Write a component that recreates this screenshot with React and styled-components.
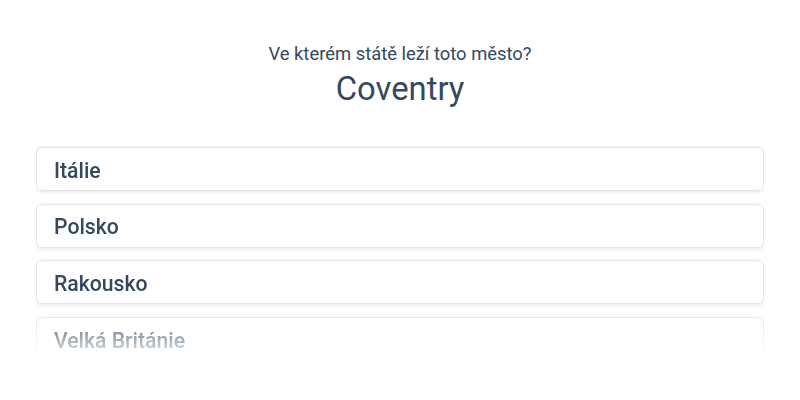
import React from "react";
import styled, { createGlobalStyle } from "styled-components";

const GlobalStyle = createGlobalStyle`
  body {
    margin: 0;
    background: #fff;
    font-family: Roboto, "Noto Sans", sans-serif;
    color: #34495e;
  }
`;

const options = ["Itálie", "Polsko", "Rakousko", "Velká Británie"];

function App() {
  return (
    <>
      <GlobalStyle />
      <Quiz>
        <Header>
          <Question>Ve kterém státě leží toto město?</Question>
          <City>Coventry</City>
        </Header>
        <Answers>
          {options.map((o) => (
            <Answer key={o}>{o}</Answer>
          ))}
        </Answers>
      </Quiz>
    </>
  );
}

const Quiz = styled.div`
  padding: 42px 36px 0;
`;

const Header = styled.div`
  text-align: center;
  margin-bottom: 33px;
`;

const Question = styled.div`
  font-size: 18.4px;
  line-height: 24px;
`;

const City = styled.div`
  font-size: 32.8px;
  line-height: 48px;
  margin-top: -1px;
`;

const Answers = styled.div`
  display: flex;
  flex-direction: column;
  gap: 12.7px;
  height: 216px;
  overflow: hidden;
  padding: 1px 0;
  -webkit-mask-image: linear-gradient(to bottom, #000 165px, transparent 216px);
  mask-image: linear-gradient(to bottom, #000 165px, transparent 216px);
`;

const Answer = styled.div`
  flex: none;
  height: 44px;
  box-sizing: border-box;
  display: flex;
  align-items: center;
  padding: 2px 17px 0;
  border: 1px solid #e4e4e4;
  border-radius: 6px;
  box-shadow: 0 1px 4px rgba(0, 0, 0, 0.1);
  font-size: 21.2px;
  font-weight: 500;
  color: #34495e;
  background: #fff;
`;

export default App;
